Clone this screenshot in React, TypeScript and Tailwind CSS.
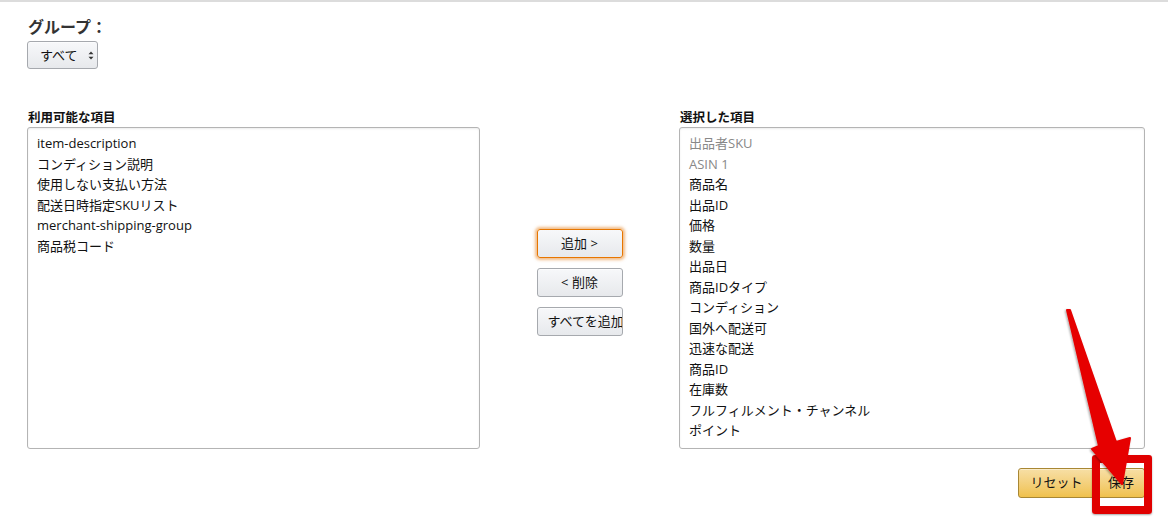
import React from "react";

const font = { fontFamily: '"Open Sans", "Noto Sans CJK JP", sans-serif' };

const available = [
  "item-description",
  "コンディション説明",
  "使用しない支払い方法",
  "配送日時指定SKUリスト",
  "merchant-shipping-group",
  "商品税コード",
];

const selected: { t: string; muted?: boolean }[] = [
  { t: "出品者SKU", muted: true },
  { t: "ASIN 1", muted: true },
  { t: "商品名" },
  { t: "出品ID" },
  { t: "価格" },
  { t: "数量" },
  { t: "出品日" },
  { t: "商品IDタイプ" },
  { t: "コンディション" },
  { t: "国外へ配送可" },
  { t: "迅速な配送" },
  { t: "商品ID" },
  { t: "在庫数" },
  { t: "フルフィルメント・チャンネル" },
  { t: "ポイント" },
];

const grayBtn =
  "bg-gradient-to-b from-[#f7f8fa] to-[#e7e9ec] border border-[#a6a9ae] rounded-[3px] shadow-[inset_0_1px_0_rgba(255,255,255,0.6)] text-[13px] text-[#111]";

export default function App() {
  return (
    <div
      className="relative w-[1168px] h-[532px] bg-white border-t-2 border-[#dcdcdc] overflow-hidden text-[#111]"
      style={font}
    >
      <div className="pl-[27px] pr-[23px] pt-[15px]">
        <h2 className="text-[16px] leading-[20px] font-bold text-[#333] pl-[1px]">グループ：</h2>
        <div className="mt-[4px]">
          <button
            className={`${grayBtn} w-[71px] h-[28px] flex items-center pl-[12px] gap-[10px]`}
          >
            <span className="leading-none">すべて</span>
            <svg width="6" height="9" viewBox="0 0 6 9">
              <path d="M3 0.5 L5.5 3.3 L0.5 3.3 Z" fill="#333" />
              <path d="M3 8.5 L5.5 5.7 L0.5 5.7 Z" fill="#333" />
            </svg>
          </button>
        </div>

        <div className="flex mt-[41px]">
          <div className="w-[453px] flex flex-col">
            <div className="text-[12.5px] leading-[16px] font-bold pl-[1px]">利用可能な項目</div>
            <div className="mt-[1px] h-[322px] border border-[#b4b4b4] rounded-[3px] shadow-[inset_0_1px_2px_rgba(0,0,0,0.08)] pl-[9px] pt-[5px]">
              {available.map((t) => (
                <div key={t} className="text-[13px] leading-[20.5px] text-[#111]">
                  {t}
                </div>
              ))}
            </div>
          </div>

          <div className="w-[199px] flex flex-col items-center pt-[119px] gap-[10px]">
            <button className="w-[86px] h-[29px] bg-gradient-to-b from-[#f7f8fa] to-[#e7e9ec] border border-[#e77600] rounded-[3px] shadow-[0_0_3px_2px_rgba(228,121,17,0.5)] text-[13px] text-[#111]">
              追加 &gt;
            </button>
            <button className={`${grayBtn} w-[86px] h-[29px]`}>&lt; 削除</button>
            <button
              className={`${grayBtn} w-[86px] h-[29px] overflow-hidden whitespace-nowrap text-left pl-[10px]`}
            >
              すべてを追加
            </button>
          </div>

          <div className="w-[466px] flex flex-col">
            <div className="text-[12.5px] leading-[16px] font-bold pl-[1px]">選択した項目</div>
            <div className="mt-[1px] h-[322px] border border-[#b4b4b4] rounded-[3px] shadow-[inset_0_1px_2px_rgba(0,0,0,0.08)] pl-[9px] pt-[5px]">
              {selected.map((s) => (
                <div
                  key={s.t}
                  className={`text-[13px] leading-[20.5px] ${s.muted ? "text-[#888]" : "text-[#111]"}`}
                >
                  {s.t}
                </div>
              ))}
            </div>
          </div>
        </div>

        <div className="flex justify-end mt-[19px] gap-[2px]">
          <button className="w-[77px] h-[30px] bg-gradient-to-b from-[#f7dfa5] to-[#f0c14b] border border-[#a88734] rounded-[3px] text-[13px] text-[#111] shadow-[inset_0_1px_0_rgba(255,255,255,0.4)]">
            リセット
          </button>
          <button className="w-[48px] h-[30px] bg-gradient-to-b from-[#f7dfa5] to-[#f0c14b] border border-[#a88734] rounded-[3px] text-[13px] text-[#111] shadow-[inset_0_1px_0_rgba(255,255,255,0.4)]">
            保存
          </button>
        </div>
      </div>

      {/* annotation overlay */}
      <div className="absolute left-[1092px] top-[453px] w-[60px] h-[59px] border-[8px] border-[#e00000] rounded-[3px] shadow-[0_1px_2px_rgba(0,0,0,0.35)] pointer-events-none" />
      <svg
        className="absolute left-0 top-0 pointer-events-none"
        width="1168"
        height="532"
        viewBox="0 0 1168 532"
      >
        <defs>
          <filter id="sh" x="-20%" y="-20%" width="140%" height="140%">
            <feDropShadow dx="-1" dy="1" stdDeviation="1" floodColor="#000" floodOpacity="0.35" />
          </filter>
        </defs>
        <polygon
          points="1067,308 1070,308 1116,440 1130,436 1122,482 1092,447 1099,444"
          fill="#e60000"
          stroke="#e60000"
          strokeWidth="2"
          strokeLinejoin="round"
          filter="url(#sh)"
        />
      </svg>
    </div>
  );
}
